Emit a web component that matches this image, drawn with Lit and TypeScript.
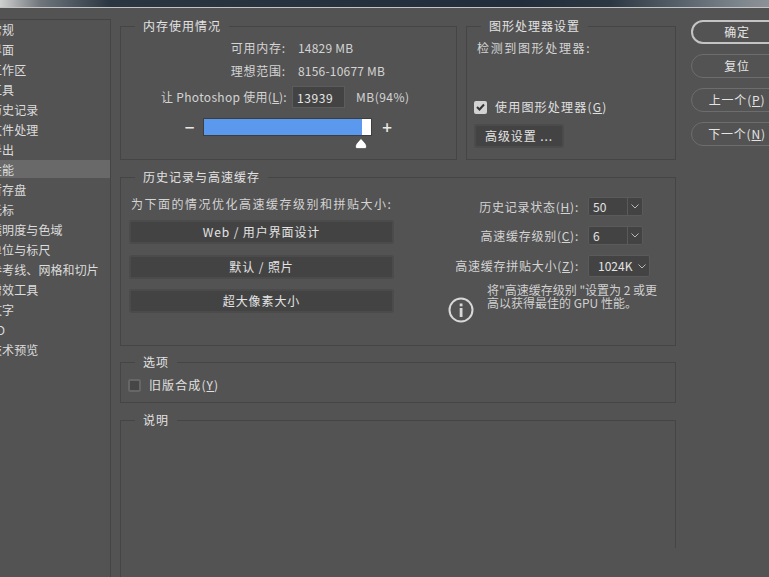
import { LitElement, html, css } from 'lit';
import { customElement } from 'lit/decorators.js';

const navItems = [
  '常规', '界面', '工作区', '工具', '历史记录', '文件处理', '导出', '性能', '暂存盘', '光标',
  '透明度与色域', '单位与标尺', '参考线、网格和切片', '增效工具', '文字', '3D', '技术预览',
];

@customElement('app-root')
export class AppRoot extends LitElement {
  static styles = css`
    :host {
      display: block;
      width: 769px;
      height: 577px;
      overflow: hidden;
      background: #535353;
      color: #d4d4d4;
      font: 12px/18px "Noto Sans CJK SC", "Liberation Sans", sans-serif;
    }
    u { text-decoration: underline; text-underline-offset: 1px; }

    .titlebar {
      height: 7px;
      background: linear-gradient(90deg, #d0d0d0 0, #6f767c 40px, #2a3642 110px, #212d3a 520px, #2b3743 610px, #7e868d 740px, #8d9297 769px);
      border-bottom: 1px solid #c4c4c4;
    }
    .layout { display: flex; height: 569px; }

    /* left nav, text runs past the window edge */
    .nav {
      flex: none;
      width: 110px;
      margin-top: 11px;
      border-top: 1px solid #444;
      border-right: 1px solid #444;
      box-sizing: content-box;
      overflow: hidden;
    }
    .nav div {
      height: 20px;
      line-height: 20px;
      text-indent: -10px;
      letter-spacing: 0.1px;
      white-space: nowrap;
      color: #dcdcdc;
    }
    .nav .on { background: #696969; height: 18px; margin-bottom: 2px; }

    .main {
      flex: none;
      width: 556px;
      margin-left: 9px;
      padding-top: 9px;
      display: flex;
      flex-direction: column;
    }
    .top-row { flex: none; display: flex; gap: 9px; margin-bottom: 8px; }

    fieldset {
      margin: 0;
      padding: 0;
      min-width: 0;
      border: 1px solid #454545;
      box-sizing: border-box;
    }
    legend {
      margin-left: 14px;
      padding: 0 8px;
      color: #e2e2e2;
      line-height: 18px;
      letter-spacing: 1px;
    }

    .memory { width: 337px; height: 143px; padding-top: 1px; }
    .mem-grid {
      display: grid;
      grid-template-columns: 165px auto;
      grid-auto-rows: 23px;
      column-gap: 12px;
      align-items: center;
      letter-spacing: 0.2px;
    }
    .mem-grid > span:nth-child(odd) { text-align: right; letter-spacing: 0.8px; }
    .use-row { display: flex; align-items: center; margin-top: 4px; letter-spacing: 0.3px; }
    .use-label { width: 166px; text-align: right; white-space: nowrap; }
    .num-input {
      width: 53px;
      height: 22px;
      line-height: 21px;
      margin-left: 5px;
      padding-left: 4px;
      box-sizing: border-box;
      background: #434343;
      border: 1px solid #5c5c5c;
      color: #e8e8e8;
      letter-spacing: 0.6px;
    }
    .unit { margin-left: 11px; letter-spacing: 0.5px; }
    .slider { display: flex; align-items: center; margin: 10px 0 0 55px; }
    .slider .sign { width: 27px; text-align: center; font-size: 17px; color: #e8e8e8; font-weight: 500; }
    .track {
      position: relative;
      width: 169px;
      height: 18px;
      box-sizing: border-box;
      background: #fff;
      border: 1px solid #3e3e3e;
    }
    .track .fill { width: 158px; height: 100%; background: #5b99ee; }
    .track svg { position: absolute; left: 151px; top: 19px; display: block; }
    .slider .sign.plus { width: 30px; }

    .gpu { width: 210px; height: 143px; padding: 0 0 0 7px; position: relative; }
    .gpu legend { margin-left: 7px; }
    .gpu-text { margin: 4px 0 0 3px; letter-spacing: 1.65px; white-space: nowrap; }
    .check-row { display: flex; align-items: center; gap: 8px; white-space: nowrap; }
    .gpu .check-row { margin-top: 41px; letter-spacing: 1.2px; color: #e0e0e0; }
    .box {
      flex: none;
      width: 13px;
      height: 13px;
      box-sizing: border-box;
      border-radius: 2px;
      display: flex;
      align-items: center;
      justify-content: center;
    }
    .box.checked { background: #d2d2d2; }
    .box.empty { background: #464646; border: 2px solid #666; }
    .btn {
      box-sizing: border-box;
      background: #434343;
      border: 2px solid #4b4b4b;
      border-radius: 3px;
      text-align: center;
      color: #e4e4e4;
      letter-spacing: 0.9px;
    }
    .gpu .btn { width: 90px; height: 24px; line-height: 20px; margin-top: 8px; }

    .history { flex: none; height: 178px; margin-bottom: 7px; display: flex; justify-content: space-between; }
    .hist-left { width: 265px; margin-left: 8px; }
    .hist-head { margin: 9px 0 7px 2px; letter-spacing: 1.5px; white-space: nowrap; }
    .hist-btns { display: grid; grid-auto-rows: 24px; row-gap: 10.5px; }
    .hist-btns .btn { line-height: 20px; }
    .hist-right { width: 226px; margin-right: 32px; padding-top: 11px; }
    .field-row { display: flex; align-items: center; justify-content: flex-end; margin-bottom: 10px; height: 19px; }
    .field-row.wide { height: 22px; margin-right: -7px; margin-bottom: 6px; }
    .field-row > span { letter-spacing: 0.75px; white-space: nowrap; margin-right: 9px; }
    .select {
      width: 55px;
      height: 19px;
      line-height: 17px;
      box-sizing: border-box;
      display: flex;
      background: #434343;
      border: 1px solid #5a5a5a;
      border-radius: 2px;
      color: #e4e4e4;
    }
    .select b { flex: 1; font-weight: 400; padding-left: 4px; }
    .select i { flex: none; width: 14px; border-left: 1px solid #5a5a5a; display: flex; align-items: center; justify-content: center; }
    .wide .select { width: 62px; height: 22px; line-height: 20px; }
    .wide .select b { padding-left: 9px; }
    .wide .select i { border-left: 0; }
    .note { display: flex; margin-left: 31px; }
    .note svg { flex: none; margin-top: 14px; display: block; }
    .note p { margin: 0 0 0 13px; line-height: 13px; white-space: nowrap; font-size: 12px; color: #d0d0d0; }

    .options { flex: none; height: 50px; margin-bottom: 8px; }
    .options .check-row { margin: 5px 0 0 7px; letter-spacing: 1.1px; color: #e0e0e0; }

    /* bottom panel, right edge stops short of the window */
    .desc { position: relative; flex: 1; border-right: 0; border-bottom: 0; }
    .desc::after {
      content: '';
      position: absolute;
      right: 0;
      top: -9px;
      width: 1px;
      height: 128px;
      background: #454545;
    }

    .actions {
      flex: none;
      width: 92px;
      margin: 12px 0 0 15px;
      display: grid;
      grid-auto-rows: 24px;
      row-gap: 10px;
    }
    .pill {
      box-sizing: border-box;
      border: 1px solid #6d6d6d;
      border-radius: 12px;
      line-height: 21px;
      text-align: center;
      color: #e4e4e4;
      letter-spacing: 0.8px;
      white-space: nowrap;
    }
    .pill.primary { border: 2px solid #c4c4c4; line-height: 20px; }
  `;

  render() {
    return html`
      <div class="titlebar"></div>
      <div class="layout">
        <nav class="nav">
          ${navItems.map((t) => html`<div class=${t === '性能' ? 'on' : ''}>${t}</div>`)}
        </nav>

        <div class="main">
          <div class="top-row">
            <fieldset class="memory">
              <legend>内存使用情况</legend>
              <div class="mem-grid">
                <span>可用内存:</span><span>14829 MB</span>
                <span>理想范围:</span><span>8156-10677 MB</span>
              </div>
              <div class="use-row">
                <span class="use-label">让 Photoshop 使用(<u>L</u>):</span>
                <span class="num-input">13939</span>
                <span class="unit">MB(94%)</span>
              </div>
              <div class="slider">
                <span class="sign">−</span>
                <div class="track">
                  <div class="fill"></div>
                  <svg width="12" height="11" viewBox="0 0 12 11">
                    <path d="M6 0.5 L10 5 Q11.5 6.5 11.5 8.5 L11 10.5 L1 10.5 L0.5 8.5 Q0.5 6.5 2 5 Z" fill="#fff" stroke="#3e3e3e" stroke-width="0.6" />
                  </svg>
                </div>
                <span class="sign plus">+</span>
              </div>
            </fieldset>

            <fieldset class="gpu">
              <legend>图形处理器设置</legend>
              <div class="gpu-text">检测到图形处理器:</div>
              <div class="check-row">
                <span class="box checked">
                  <svg width="9" height="8" viewBox="0 0 9 8"><path d="M1 4 L3.5 6.5 L8 1.5" fill="none" stroke="#333" stroke-width="2" /></svg>
                </span>
                <span>使用图形处理器(<u>G</u>)</span>
              </div>
              <div class="btn">高级设置 ...</div>
            </fieldset>
          </div>

          <fieldset class="history">
            <legend>历史记录与高速缓存</legend>
            <div class="hist-left">
              <div class="hist-head">为下面的情况优化高速缓存级别和拼贴大小:</div>
              <div class="hist-btns">
                <div class="btn">Web / 用户界面设计</div>
                <div class="btn">默认 / 照片</div>
                <div class="btn">超大像素大小</div>
              </div>
            </div>
            <div class="hist-right">
              <div class="field-row">
                <span>历史记录状态(<u>H</u>):</span>
                <div class="select"><b>50</b><i>${this.chevron()}</i></div>
              </div>
              <div class="field-row">
                <span>高速缓存级别(<u>C</u>):</span>
                <div class="select"><b>6</b><i>${this.chevron()}</i></div>
              </div>
              <div class="field-row wide">
                <span>高速缓存拼贴大小(<u>Z</u>):</span>
                <div class="select"><b>1024K</b><i>${this.chevron()}</i></div>
              </div>
              <div class="note">
                <svg width="26" height="26" viewBox="0 0 26 26">
                  <circle cx="13" cy="13" r="11.5" fill="none" stroke="#d8d8d8" stroke-width="2" />
                  <rect x="11.7" y="6.5" width="2.8" height="2.8" fill="#d8d8d8" />
                  <rect x="11.7" y="11" width="2.8" height="9" fill="#d8d8d8" />
                </svg>
                <p>将"高速缓存级别 "设置为 2 或更<br />高以获得最佳的 GPU 性能。</p>
              </div>
            </div>
          </fieldset>

          <fieldset class="options">
            <legend>选项</legend>
            <div class="check-row">
              <span class="box empty"></span>
              <span>旧版合成(<u>Y</u>)</span>
            </div>
          </fieldset>

          <fieldset class="desc">
            <legend>说明</legend>
          </fieldset>
        </div>

        <div class="actions">
          <div class="pill primary">确定</div>
          <div class="pill">复位</div>
          <div class="pill">上一个(<u>P</u>)</div>
          <div class="pill">下一个(<u>N</u>)</div>
        </div>
      </div>
    `;
  }

  chevron() {
    return html`<svg width="8" height="5" viewBox="0 0 8 5"><path d="M0.5 0.5 L4 4 L7.5 0.5" fill="none" stroke="#b8b8b8" stroke-width="1" /></svg>`;
  }
}
